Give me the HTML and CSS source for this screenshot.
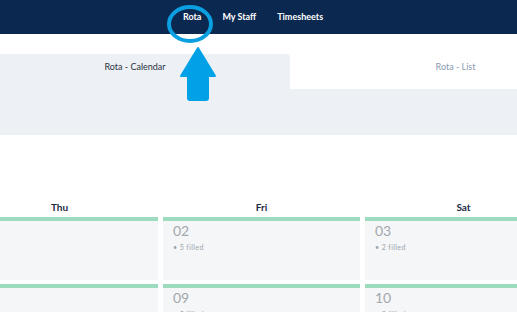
FILE: index.html
```html
<!DOCTYPE html>
<html lang="en">

<head>
    <meta charset="UTF-8">
    <meta name="viewport" content="width=device-width, initial-scale=1.0">
    <title>Rota</title>
    <link rel="stylesheet" href="styles.css">
</head>

<body>
    <!-- top navigation -->
    <div class="topnav">
        <a href="#" class="navlink">Rota</a>
        <a href="#" class="navlink">My Staff</a>
        <a href="#" class="navlink">Timesheets</a>
    </div>

    <!-- tabs -->
    <div class="tabs">
        <div class="tab active">Rota - Calendar</div>
        <div class="tab">Rota - List</div>
    </div>
    <div class="toolbar"></div>

    <!-- calendar -->
    <div class="calendar">
        <div class="dayname">Thu</div>
        <div class="dayname">Fri</div>
        <div class="dayname">Sat</div>

        <div class="cell"></div>
        <div class="cell">
            <div class="date">02</div>
            <div class="filled">&bull; 5 filled</div>
        </div>
        <div class="cell">
            <div class="date">03</div>
            <div class="filled">&bull; 2 filled</div>
        </div>

        <div class="cell"></div>
        <div class="cell">
            <div class="date">09</div>
            <div class="filled">&bull; 5 filled</div>
        </div>
        <div class="cell">
            <div class="date">10</div>
            <div class="filled">&bull; 2 filled</div>
        </div>
    </div>

    <!-- annotation: ring round "Rota" and arrow -->
    <svg class="mark" width="517" height="110" viewBox="0 0 517 110">
        <ellipse cx="190" cy="24" rx="21" ry="17" fill="none" stroke="#0a9fe0" stroke-width="4"/>
        <path d="M198 48 L215 76 L208 76 L208 98 Q208 100 206 100 L190 100 Q188 100 188 98 L188 76 L181 76 Z" fill="#00a1e6" stroke="#00a1e6" stroke-width="2" stroke-linejoin="round"/>
    </svg>
</body>

</html>
```

FILE: styles.css
```css
* {
    margin: 0;
    padding: 0;
    box-sizing: border-box;
}

body {
    width: 517px;
    height: 312px;
    overflow: hidden;
    position: relative;
    background-color: #fff;
    font-family: Lato, "Liberation Sans", sans-serif;
}

/* top bar */
.topnav {
    height: 34px;
    background-color: #0b2850;
    display: flex;
    justify-content: center;
    align-items: center;
    gap: 21px;
    padding-right: 11px;
    padding-bottom: 1px;
}

.navlink {
    color: #fff;
    font-size: 9px;
    font-weight: bold;
    text-decoration: none;
}

/* tabs */
.tabs {
    display: flex;
    margin-top: 20px;
    height: 35px;
}

.tab {
    flex: 1;
    padding-top: 7px;
    padding-left: 104px;
    text-align: center;
    font-size: 9px;
    color: #8a9bb0;
    background-color: #fff;
}

.tab.active {
    flex: 0 0 290px;
    padding-left: 0;
    padding-right: 20px;
    background-color: #edf0f5;
    color: #2a3442;
    border-top-right-radius: 3px;
}

.toolbar {
    height: 46px;
    background-color: #edf0f5;
}

/* calendar */
.calendar {
    display: grid;
    grid-template-columns: 197px 197px 197px;
    column-gap: 5px;
    row-gap: 4px;
    margin-left: -39px;
    margin-top: 66px;
}

.dayname {
    text-align: center;
    font-size: 10px;
    font-weight: bold;
    color: #1b2a44;
    height: 12px;
    line-height: 12px;
}

.cell {
    height: 63px;
    background-color: #f4f6f8;
    border-top: 4px solid #9ddbbe;
    padding: 1px 10px;
}

.date {
    font-size: 14px;
    color: #a3a8ad;
    line-height: 18px;
}

.filled {
    font-size: 7px;
    color: #9ea5ac;
    margin-top: 3px;
    letter-spacing: 0.4px;
}

/* annotation over the page */
.mark {
    position: absolute;
    left: 0;
    top: 0;
}
```
